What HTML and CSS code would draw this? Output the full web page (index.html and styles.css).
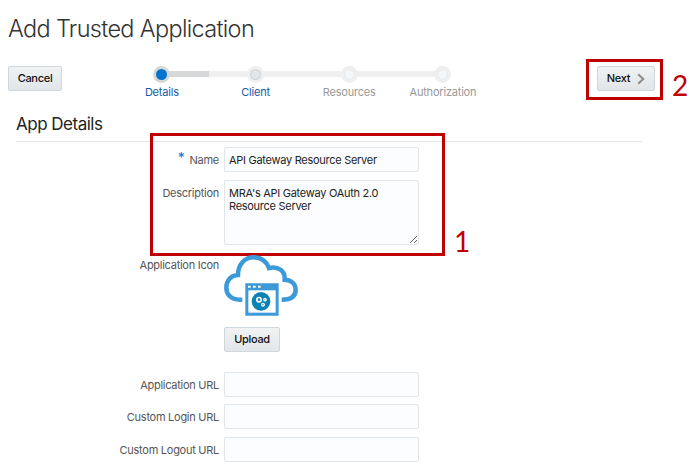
FILE: index.html
```html
<!DOCTYPE html>
<html lang="en">
<head>
<meta charset="utf-8">
<title>Add Trusted Application</title>
<link rel="stylesheet" href="styles.css">
</head>
<body>
<h1 class="title"><span>Add Trusted Application</span></h1>
<div class="toolbar">
  <button class="btn cancel">Cancel</button>
  <ol class="train">
    <li class="step current"><span class="dot"></span><span class="step-label">Details</span></li>
    <li class="step next"><span class="dot"></span><span class="step-label">Client</span></li>
    <li class="step"><span class="dot"></span><span class="step-label">Resources</span></li>
    <li class="step"><span class="dot"></span><span class="step-label">Authorization</span></li>
  </ol>
  <button class="btn forward">Next
    <svg width="8" height="12" viewBox="0 0 8 12"><path d="M1.2 1.2 6.2 6 1.2 10.8" fill="none" stroke="#8c8f91" stroke-width="2.1"/></svg>
  </button>
</div>
<h2 class="section-title"><span>App Details</span></h2>
<form class="form">
  <label class="label" for="name"><span class="required">*</span>Name</label>
  <input class="field" id="name" value="API Gateway Resource Server">
  <label class="label" for="desc">Description</label>
  <textarea class="field area" id="desc">MRA's API Gateway OAuth 2.0
Resource Server</textarea>
  <span class="label">Application Icon</span>
  <div class="icon-cell">
    <svg class="cloud" viewBox="42 16 222 183">
      <path d="M97 150H89C63 150 49 134 49 114C49 92 63 77 84 76C84 45 104 23 131 23C152 23 169 35 177 55C205 48 226 65 224 90C245 91 257 104 257 121C257 141 242 150 215 150" fill="none" stroke="#3c9ad9" stroke-width="13.5"/>
      <path d="M106 101H206V198H106Z" fill="#3c9ad9"/>
      <path d="M115 122H197V189H115Z" fill="#fff"/>
      <path d="M114 108h8v6h-8zM129 108h8v6h-8zM144 108h8v6h-8z" fill="#fff"/>
      <circle cx="153" cy="155" r="28" fill="#0c83b5"/>
      <g fill="none" stroke="#fff" stroke-width="5">
        <circle cx="147" cy="150" r="6.5"/>
        <circle cx="165" cy="150" r="3.5" stroke-width="4"/>
        <circle cx="159" cy="165" r="4" stroke-width="4"/>
      </g>
    </svg>
    <button type="button" class="btn upload">Upload</button>
  </div>
  <label class="label" for="appurl">Application URL</label>
  <input class="field" id="appurl">
  <label class="label" for="login">Custom Login URL</label>
  <input class="field" id="login">
  <label class="label" for="logout">Custom Logout URL</label>
  <input class="field" id="logout">
</form>
<div class="callout callout-fields"></div>
<div class="callout callout-next"></div>
<span class="number number-one">1</span>
<span class="number number-two">2</span>
</body>
</html>
```
FILE: styles.css
```css
* { box-sizing: border-box; }

body {
  margin: 0;
  height: 474px;
  overflow: hidden;
  position: relative;
  background: #fff;
  color: #222;
  font: 11px/13px Inter, "Liberation Sans", sans-serif;
}

.title {
  margin: 0;
  padding: 14px 8px 0;
  height: 66px;
  font-size: 23.5px;
  line-height: 30px;
  font-weight: 300;
  letter-spacing: -0.67px;
  color: #333;
}

.toolbar {
  display: flex;
  align-items: flex-start;
  height: 42px;
  padding: 0 41px 0 8px;
}

.btn {
  display: flex;
  align-items: center;
  justify-content: center;
  height: 25px;
  padding: 0;
  border: 1px solid #ced7dd;
  border-radius: 2px;
  background: linear-gradient(#f0f2f3, #e2e6e9);
  color: #111;
  font: 500 11px/13px Inter, "Liberation Sans", sans-serif;
  letter-spacing: -0.3px;
}

.cancel { width: 54px; }
.forward { width: 58px; gap: 7px; margin-left: auto; }
.upload { width: 56px; margin-top: 11px; }

.train {
  display: flex;
  margin: 0 0 0 53px;
  padding: 0;
  list-style: none;
}

.step {
  position: relative;
  display: flex;
  flex-direction: column;
  align-items: center;
  width: 93.7px;
  color: #999;
  letter-spacing: -0.2px;
}

.step:not(:last-child)::before {
  content: "";
  position: absolute;
  left: 50%;
  top: 5px;
  width: 100%;
  height: 6px;
  background: #efefef;
}

.step.current::before {
  background: linear-gradient(90deg, #d5d7d8 50%, #efefef 50%) !important;
}

.dot {
  position: relative;
  z-index: 1;
  width: 17px;
  height: 17px;
  border: 3px solid #efefef;
  border-radius: 50%;
  background: #f4f6f8;
  box-shadow: inset 0 0 0 1px #e5eaee;
}

.next .dot { background: #e2e6e9; box-shadow: inset 0 0 0 1px #cbd2d7; }
.current .dot { border-color: #d5d7d8; background: #0572ce; box-shadow: none; }
.step-label { margin-top: 3px; }
.current .step-label, .next .step-label { color: #145ba6; }

.section-title {
  height: 34px;
  margin: 0 54px 0 16px;
  padding-top: 4px;
  border-bottom: 1px solid #dfe5eb;
  font-size: 17px;
  line-height: 24px;
  font-weight: 400;
  letter-spacing: -0.5px;
}

.form {
  display: grid;
  grid-template-columns: 219px 195px;
  column-gap: 5px;
  grid-template-rows: 25px 65px 112px 25px 25px 25px;
  row-gap: 7.5px;
  margin-top: 5px;
}

.label {
  padding-top: 7px;
  text-align: right;
  color: #555;
  letter-spacing: -0.27px;
}

.required {
  margin-right: 5px;
  position: relative;
  top: -1px;
  font-size: 14px;
  line-height: 0;
  color: #0572ce;
}

.field {
  display: block;
  width: 195px;
  height: 25px;
  margin: 0;
  padding: 0 4px;
  border: 1px solid #e2e6e9;
  border-radius: 2px;
  background: #fcfdfe;
  color: #222;
  font: 11px/13px Inter, "Liberation Sans", sans-serif;
  letter-spacing: -0.28px;
  outline: 0;
}

.area { height: 65px; padding: 6px 4px; white-space: pre; overflow: hidden; }
.icon-cell { padding-top: 3px; }
.cloud { display: block; width: 74px; height: 61px; position: relative; z-index: 2; }

.callout {
  position: absolute;
  border: 3px solid #c00000;
  pointer-events: none;
}

.callout-fields { left: 150px; top: 133px; width: 295px; height: 123px; }
.callout-next { left: 586px; top: 59px; width: 77px; height: 41px; }

.number {
  position: absolute;
  color: #c00000;
  font: 28px/32px Lato, sans-serif;
}

.number-one { left: 454px; top: 225px; }
.number-two { left: 672px; top: 69px; }
```
